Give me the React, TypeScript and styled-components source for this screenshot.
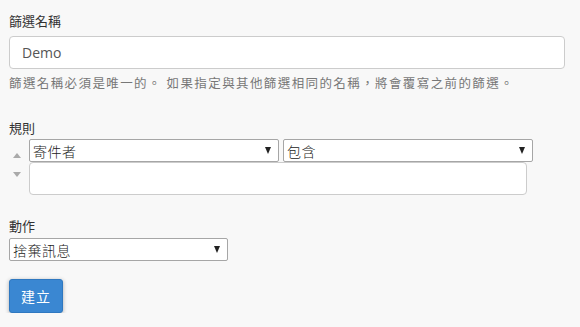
import React from 'react'
import styled, { createGlobalStyle } from 'styled-components'

const GlobalStyle = createGlobalStyle`
  html, body {
    margin: 0;
    padding: 0;
    background: #f8f8f8;
  }
  body {
    font-family: "Open Sans", "Noto Sans CJK TC", sans-serif;
    color: #333;
  }
`

const Page = styled.form`
  display: flex;
  flex-direction: column;
  padding: 12px 9px 0;
`

const Group = styled.div<{ $gap?: number }>`
  display: flex;
  flex-direction: column;
  margin-top: ${p => p.$gap ?? 0}px;
`

const Label = styled.label<{ $space?: number }>`
  font-size: 13px;
  line-height: 18px;
  color: #333;
  margin-bottom: ${p => p.$space ?? 3}px;
`

const TextInput = styled.input`
  box-sizing: border-box;
  height: 33px;
  width: 556px;
  padding: 0 12px;
  border: 1px solid #ccc;
  border-radius: 4px;
  background: #fff;
  font-family: "Open Sans", "Noto Sans CJK TC", sans-serif;
  font-size: 14px;
  color: #555;
  outline: none;
`

const Help = styled.div`
  margin-top: 6px;
  font-size: 12.5px;
  letter-spacing: 1.4px;
  line-height: 18px;
  color: #777;
  white-space: nowrap;
`

const RuleRow = styled.div`
  display: flex;
`

const Mover = styled.div`
  width: 20px;
  display: flex;
  flex-direction: column;
  align-items: center;
  padding-top: 14px;
  gap: 14px;
`

const Tri = styled.span<{ $down?: boolean }>`
  width: 0;
  height: 0;
  margin-left: -4px;
  border-left: 4.5px solid transparent;
  border-right: 4.5px solid transparent;
  ${p => p.$down
    ? 'border-top: 5px solid #aaa;'
    : 'border-bottom: 5px solid #aaa;'}
`

const RuleBody = styled.div`
  display: flex;
  flex-direction: column;
`

const SelectPair = styled.div`
  display: flex;
  gap: 4px;
`

const SelectWrap = styled.div<{ $w: number }>`
  position: relative;
  width: ${p => p.$w}px;
`

const Select = styled.select`
  box-sizing: border-box;
  width: 100%;
  height: 23px;
  appearance: none;
  -webkit-appearance: none;
  border: 1px solid #a6a6a6;
  border-radius: 2px;
  background: #fff;
  padding: 0 20px 0 3px;
  font-family: "Noto Sans CJK TC", sans-serif;
  font-weight: 300;
  font-size: 14px;
  letter-spacing: 0.5px;
  color: #222;
  outline: none;
`

const Caret = styled.span`
  position: absolute;
  right: 8px;
  top: 8px;
  width: 0;
  height: 0;
  border-left: 3.5px solid transparent;
  border-right: 3.5px solid transparent;
  border-top: 7px solid #222;
  pointer-events: none;
`

const ValueBox = styled.input`
  box-sizing: border-box;
  width: 498px;
  height: 33px;
  border: 1px solid #ccc;
  border-radius: 4px;
  background: #fff;
  outline: none;
`

const SubmitButton = styled.button`
  align-self: flex-start;
  margin-top: 18px;
  width: 54px;
  height: 34px;
  border: 1px solid #2f78c0;
  border-radius: 3px;
  background: #3a87d2;
  color: #fff;
  font-family: "Open Sans", "Noto Sans CJK TC", sans-serif;
  font-size: 14px;
  letter-spacing: 1px;
  box-shadow: 0 1px 4px rgba(0, 0, 0, 0.3);
  cursor: pointer;
`

function DropDown({ width, value, options }: { width: number; value: string; options: string[] }) {
  return (
    <SelectWrap $w={width}>
      <Select defaultValue={value}>
        {options.map(o => <option key={o}>{o}</option>)}
      </Select>
      <Caret />
    </SelectWrap>
  )
}

export default function App() {
  return (
    <>
      <GlobalStyle />
      <Page onSubmit={e => e.preventDefault()}>
        <Group>
          <Label $space={6}>篩選名稱</Label>
          <TextInput defaultValue="Demo" />
          <Help>篩選名稱必須是唯一的。 如果指定與其他篩選相同的名稱，將會覆寫之前的篩選。</Help>
        </Group>

        <Group $gap={26}>
          <Label $space={2}>規則</Label>
          <RuleRow>
            <Mover>
              <Tri />
              <Tri $down />
            </Mover>
            <RuleBody>
              <SelectPair>
                <DropDown width={250} value="寄件者" options={['寄件者', '主旨', '收件者']} />
                <DropDown width={250} value="包含" options={['包含', '不包含', '等於']} />
              </SelectPair>
              <ValueBox />
            </RuleBody>
          </RuleRow>
        </Group>

        <Group $gap={22}>
          <Label $space={3}>動作</Label>
          <DropDown width={219} value="捨棄訊息" options={['捨棄訊息', '轉寄訊息', '移至資料夾']} />
        </Group>

        <SubmitButton type="submit">建立</SubmitButton>
      </Page>
    </>
  )
}
